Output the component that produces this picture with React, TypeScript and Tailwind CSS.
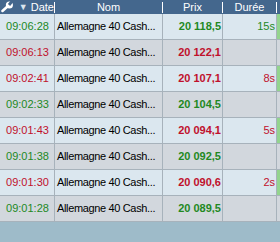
import { FC } from "react";

type Row = {
  time: string;
  price: string;
  dur?: string;
  up: boolean;
};

const rows: Row[] = [
  { time: "09:06:28", price: "20 118,5", dur: "15s", up: true },
  { time: "09:06:13", price: "20 122,1", up: false },
  { time: "09:02:41", price: "20 107,1", dur: "8s", up: false },
  { time: "09:02:33", price: "20 104,5", up: true },
  { time: "09:01:43", price: "20 094,1", dur: "5s", up: false },
  { time: "09:01:38", price: "20 092,5", up: true },
  { time: "09:01:30", price: "20 090,6", dur: "2s", up: false },
  { time: "09:01:28", price: "20 089,5", up: true },
];

// small white spanner, handle to lower left, open jaw top right
const Wrench: FC = () => (
  <svg width="13" height="12" viewBox="0 0 13 12" className="ml-[1px]">
    <line x1="1.5" y1="10" x2="6.5" y2="5.5" stroke="#ffffff" strokeWidth="2.6" strokeLinecap="round" />
    <circle cx="8.5" cy="4" r="3.6" fill="#ffffff" />
    <rect x="8.2" y="-1" width="3" height="5.5" fill="#44678d" transform="rotate(40 9.7 2)" />
  </svg>
);

const Sep: FC = () => <div className="w-px h-[11px] bg-white shrink-0" />;

const App: FC = () => {
  return (
    <div
      className="w-[280px] h-[242px] bg-[#9ebbc9] text-[11px] leading-none"
      style={{ fontFamily: '"Liberation Sans", Arial, sans-serif' }}
    >
      <div className="flex items-center h-[14px] bg-[#44678d] text-white">
        <div className="w-[54px] flex items-center">
          <Wrench />
          <span className="ml-[5px] text-[9px] text-[#dbe5ee]">▼</span>
          <span className="ml-[3px]">Date</span>
        </div>
        <Sep />
        <div className="w-[107px] text-center">Nom</div>
        <Sep />
        <div className="w-[59px] text-center">Prix</div>
        <Sep />
        <div className="w-[53px] text-center">Durée</div>
        <Sep />
        <div className="w-[3px]" />
      </div>
      {rows.map((r, i) => {
        const light = i % 2 === 0;
        const color = r.up ? "text-[#22891f]" : "text-[#c0102c]";
        return (
          <div
            key={r.time}
            className={`flex h-[26px] border-b border-[#a7b2bb] ${
              light ? "bg-[#dbe7ef]" : "bg-[#d2d7dd]"
            }`}
          >
            <div
              className={`w-[55px] border-r border-[#a7b2bb] flex items-center justify-center pl-[1px] ${color}`}
            >
              {r.time}
            </div>
            <div className="w-[108px] border-r border-[#a7b2bb] flex items-center pl-[2px] text-black tracking-[-0.35px] whitespace-nowrap overflow-hidden">
              Allemagne 40 Cash...
            </div>
            <div
              className={`w-[60px] border-r border-[#a7b2bb] flex items-center justify-end pr-[1px] font-bold ${color}`}
            >
              {r.price}
            </div>
            <div
              className={`w-[54px] border-r border-[#a7b2bb] flex items-center justify-end pr-[1px] ${color}`}
            >
              {r.dur}
            </div>
            <div className={`w-[3px] ${r.dur ? "bg-[#93d48e]" : ""}`} />
          </div>
        );
      })}
    </div>
  );
};

export default App;
